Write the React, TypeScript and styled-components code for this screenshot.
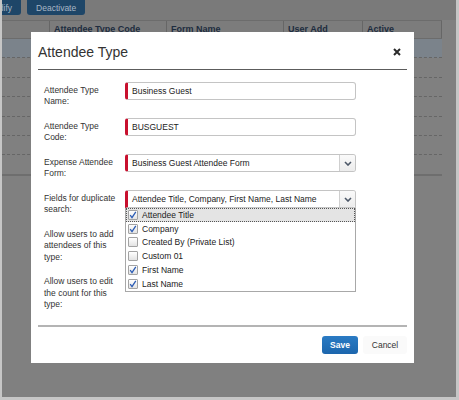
import React from "react";
import styled, { createGlobalStyle, css } from "styled-components";

const GlobalStyle = createGlobalStyle`
    html, body {
        margin: 0;
        padding: 0;
        background: #c6c6c6;
    }
    body {
        font-family: "Liberation Sans", Arial, sans-serif;
    }
`

const Frame = styled.div`
    width: 459px;
    height: 400px;
    box-sizing: border-box;
    padding: 0 3px 3px 2px;
    background: #c6c6c6;
`
const Backdrop = styled.div`
    position: relative;
    height: 100%;
    background: #808080;
    overflow: hidden;
`
const Toolbar = styled.div`
    display: flex;
    gap: 6px;
    height: 20px;
    margin-left: -24px;
    background: #7a7a7a;
`
const ToolButton = styled.div`
    height: 15px;
    padding: 0 9px;
    display: flex;
    align-items: center;
    background: #1e4668;
    border-radius: 0 0 3px 3px;
    color: #a9b7c6;
    font-size: 8.5px;
`
const Table = styled.div`
    width: 440px;
`
const HeaderRow = styled.div`
    display: grid;
    grid-template-columns: 48px 117px 117px 79px 79px;
    height: 17px;
    border-top: 1px solid #6c6c6c;
    border-bottom: 1px solid #6c6c6c;
    background: #7c7c7c;
`
const HeaderCell = styled.div`
    border-right: 1px solid #666;
    padding-left: 4px;
    font-size: 9px;
    font-weight: bold;
    line-height: 17px;
    color: #1e2d40;
    white-space: nowrap;
    overflow: hidden;
`
const BodyRow = styled.div<{ $selected?: boolean; $last?: boolean }>`
    height: 18.4px;
    border-bottom: 1px dashed #666;
    background: ${p => (p.$selected ? "#7b838b" : "transparent")};
    ${p => p.$last && css`
        border-bottom: 2px solid #6e6e6e;
    `}
`

const Modal = styled.div`
    position: absolute;
    left: 29px;
    top: 32px;
    width: 383px;
    height: 331px;
    background: #fff;
    display: flex;
    flex-direction: column;
`
const ModalHeader = styled.div`
    margin: 10px 7px 0 7px;
    padding-bottom: 7px;
    border-bottom: 1px solid #5c5c5c;
    display: flex;
    align-items: center;
    justify-content: space-between;
`
const Title = styled.div`
    font-size: 14px;
    line-height: 20px;
    color: #333;
`
const CloseButton = styled.div`
    width: 8px;
    height: 8px;
    margin-right: 6px;
    display: flex;
`
const FormBody = styled.div`
    padding: 12px 7px 14.5px 13px;
    display: flex;
    flex-direction: column;
    gap: 10.5px;
`
const Row = styled.div`
    display: flex;
    align-items: flex-start;
`
const Label = styled.div`
    width: 81px;
    padding-top: 2.5px;
    font-size: 8.5px;
    line-height: 11.5px;
    color: #333;
`
const Field = styled.div`
    position: relative;
    width: 231px;
`
const Input = styled.div<{ $open?: boolean }>`
    height: 18px;
    box-sizing: border-box;
    display: flex;
    align-items: stretch;
    border: 1px solid #c4c4c4;
    border-left: 3px solid #c8102e;
    border-radius: ${p => (p.$open ? "3px 3px 0 0" : "3px")};
    background: #fff;
    font-size: 8.5px;
    color: #222;
`
const InputText = styled.div`
    flex: 1;
    padding-left: 4px;
    display: flex;
    align-items: center;
    white-space: nowrap;
    overflow: hidden;
`
const Caret = styled.div`
    width: 15px;
    border-left: 1px solid #cfcfcf;
    background: linear-gradient(#fafafa, #ececec);
    display: flex;
    align-items: center;
    justify-content: center;
    border-radius: 0 2px 2px 0;
`
const DropList = styled.div`
    position: absolute;
    left: 0;
    top: 100%;
    width: 231px;
    box-sizing: border-box;
    border: 1px solid #a8a8a8;
    border-top: none;
    background: #fff;
    z-index: 2;
`
const Option = styled.div<{ $active?: boolean }>`
    height: 13.8px;
    box-sizing: border-box;
    display: flex;
    align-items: center;
    gap: 4px;
    padding-left: 2px;
    font-size: 8.5px;
    color: #222;
    background: ${p => (p.$active ? "#e4e4e4" : "transparent")};
    outline: ${p => (p.$active ? "1px dotted #555" : "none")};
    outline-offset: -1px;
`
const Box = styled.div`
    width: 10px;
    height: 10px;
    box-sizing: border-box;
    border: 1px solid #a3a3a3;
    border-radius: 1px;
    background: linear-gradient(#ffffff, #e3e3e3);
    display: flex;
    align-items: center;
    justify-content: center;
`
const Footer = styled.div`
    margin: 0 7px;
    padding: 9px 0 10px;
    border-top: 2px solid #b4b4b4;
    display: flex;
    justify-content: flex-end;
    gap: 5px;
`
const Button = styled.div<{ $primary?: boolean }>`
    height: 18px;
    padding: 0 8px;
    display: flex;
    align-items: center;
    justify-content: center;
    font-size: 8.5px;
    border-radius: 3px;
    ${p => p.$primary
        ? css`
            width: 36px;
            box-sizing: border-box;
            background: linear-gradient(#2a7bc4, #1c66ad);
            color: #fff;
            font-weight: bold;
        `
        : css`
            width: 44px;
            box-sizing: border-box;
            background: #fafafa;
            color: #333;
        `}
`

const Chevron = () => (
    <svg width="8" height="5" viewBox="0 0 8 5">
        <path d="M1 1 L4 4 L7 1" fill="none" stroke="#4d5868" strokeWidth="1.6" />
    </svg>
)

const Check = () => (
    <svg width="8" height="8" viewBox="0 0 8 8">
        <path d="M1.2 4.2 L3 6.6 L6.8 0.8" fill="none" stroke="#2b5cb5" strokeWidth="1.3" />
    </svg>
)

const options = [
    { name: "Attendee Title", checked: true },
    { name: "Company", checked: true },
    { name: "Created By (Private List)", checked: false },
    { name: "Custom 01", checked: false },
    { name: "First Name", checked: true },
    { name: "Last Name", checked: true },
]

const App: React.FC = () => {
    return (
        <>
            <GlobalStyle />
            <Frame>
                <Backdrop>
                    <Toolbar>
                        <ToolButton>Modify</ToolButton>
                        <ToolButton>Deactivate</ToolButton>
                    </Toolbar>
                    <Table>
                        <HeaderRow>
                            <HeaderCell />
                            <HeaderCell>Attendee Type Code</HeaderCell>
                            <HeaderCell>Form Name</HeaderCell>
                            <HeaderCell>User Add</HeaderCell>
                            <HeaderCell>Active</HeaderCell>
                        </HeaderRow>
                        <BodyRow $selected />
                        <BodyRow />
                        <BodyRow />
                        <BodyRow />
                        <BodyRow />
                        <BodyRow />
                        <BodyRow $last />
                    </Table>

                    <Modal>
                        <ModalHeader>
                            <Title>Attendee Type</Title>
                            <CloseButton>
                                <svg width="8" height="8" viewBox="0 0 8 8">
                                    <path d="M1 1 L7 7 M7 1 L1 7" stroke="#2b2b2b" strokeWidth="2" />
                                </svg>
                            </CloseButton>
                        </ModalHeader>
                        <FormBody>
                            <Row>
                                <Label>Attendee Type<br />Name:</Label>
                                <Field>
                                    <Input><InputText>Business Guest</InputText></Input>
                                </Field>
                            </Row>
                            <Row>
                                <Label>Attendee Type<br />Code:</Label>
                                <Field>
                                    <Input><InputText>BUSGUEST</InputText></Input>
                                </Field>
                            </Row>
                            <Row>
                                <Label>Expense Attendee<br />Form:</Label>
                                <Field>
                                    <Input>
                                        <InputText>Business Guest Attendee Form</InputText>
                                        <Caret><Chevron /></Caret>
                                    </Input>
                                </Field>
                            </Row>
                            <Row>
                                <Label>Fields for duplicate<br />search:</Label>
                                <Field>
                                    <Input $open>
                                        <InputText>Attendee Title, Company, First Name, Last Name</InputText>
                                        <Caret><Chevron /></Caret>
                                    </Input>
                                    <DropList>
                                        {options.map((o, i) => (
                                            <Option key={o.name} $active={i === 0}>
                                                <Box>{o.checked && <Check />}</Box>
                                                {o.name}
                                            </Option>
                                        ))}
                                    </DropList>
                                </Field>
                            </Row>
                            <Row>
                                <Label>Allow users to add<br />attendees of this<br />type:</Label>
                                <Field />
                            </Row>
                            <Row>
                                <Label>Allow users to edit<br />the count for this<br />type:</Label>
                                <Field />
                            </Row>
                        </FormBody>
                        <Footer>
                            <Button $primary>Save</Button>
                            <Button>Cancel</Button>
                        </Footer>
                    </Modal>
                </Backdrop>
            </Frame>
        </>
    )
}

export default App;
